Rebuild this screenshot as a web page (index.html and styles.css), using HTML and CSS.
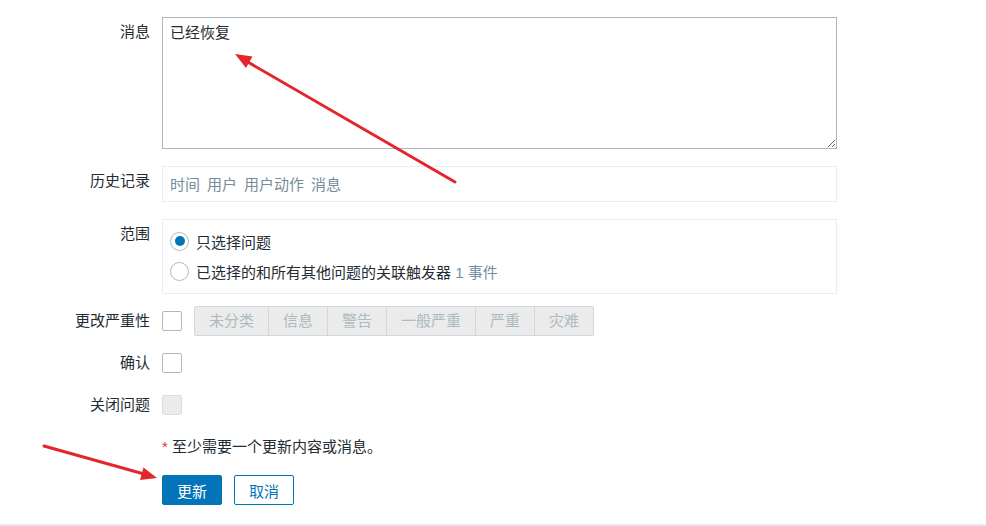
FILE: index.html
```html
<!DOCTYPE html>
<html lang="zh">
<head>
<meta charset="utf-8">
<link rel="stylesheet" href="styles.css">
</head>
<body>
<div class="page">
  <form class="form">
    <div class="row row-wide">
      <label class="label">消息</label>
      <textarea class="message">已经恢复</textarea>
    </div>
    <div class="row row-wide">
      <label class="label">历史记录</label>
      <div class="history">
        <span>时间</span><span>用户</span><span>用户动作</span><span>消息</span>
      </div>
    </div>
    <div class="row">
      <label class="label">范围</label>
      <div class="scope">
        <div class="radio-line"><span class="radio checked"></span><span>只选择问题</span></div>
        <div class="radio-line"><span class="radio"></span><span>已选择的和所有其他问题的关联触发器 <span class="muted">1 事件</span></span></div>
      </div>
    </div>
    <div class="row">
      <label class="label">更改严重性</label>
      <div class="field">
        <span class="checkbox"></span>
        <div class="severity">
          <span class="sev">未分类</span><span class="sev">信息</span><span class="sev">警告</span><span class="sev">一般严重</span><span class="sev">严重</span><span class="sev">灾难</span>
        </div>
      </div>
    </div>
    <div class="row">
      <label class="label">确认</label>
      <div class="field"><span class="checkbox"></span></div>
    </div>
    <div class="row">
      <label class="label">关闭问题</label>
      <div class="field"><span class="checkbox disabled"></span></div>
    </div>
    <div class="row">
      <span class="label"></span>
      <div class="note"><span class="star">*</span> 至少需要一个更新内容或消息。</div>
    </div>
    <div class="row">
      <span class="label"></span>
      <div class="buttons">
        <button type="button" class="btn primary">更新</button>
        <button type="button" class="btn secondary">取消</button>
      </div>
    </div>
  </form>
  <svg class="arrows" width="986" height="526" viewBox="0 0 986 526">
    <line x1="455" y1="182" x2="246" y2="61" stroke="#e5242b" stroke-width="3" stroke-linecap="round"/>
    <polygon points="235,54 252.5,56.5 246,68" fill="#e5242b"/>
    <line x1="44" y1="446" x2="144" y2="474" stroke="#e5242b" stroke-width="3" stroke-linecap="round"/>
    <polygon points="157,478 140,480 143.5,467.5" fill="#e5242b"/>
  </svg>
</div>
</body>
</html>
```

FILE: styles.css
```css
html, body {
  margin: 0;
  padding: 0;
  background: #ffffff;
}

body {
  font-family: "Liberation Sans", "Noto Sans CJK SC", Arial, sans-serif;
  font-size: 15px;
  color: #1f2c33;
}

.page {
  position: relative;
  height: 526px;
  box-sizing: border-box;
  padding-top: 17px;
  border-bottom: 2px solid #e6eaed;
  overflow: hidden;
}

.form {
  display: flex;
  flex-direction: column;
  gap: 12px;
}

.row {
  display: flex;
  align-items: flex-start;
  gap: 12px;
}

.row-wide {
  margin-bottom: 5px;
}

.label {
  width: 150px;
  flex: none;
  text-align: right;
  line-height: 30px;
  height: 30px;
}

.message {
  box-sizing: border-box;
  width: 675px;
  height: 132px;
  margin: 0;
  border: 1px solid #a9b9c2;
  border-radius: 0;
  padding: 6px 7px;
  font-family: inherit;
  font-size: 15px;
  line-height: 18px;
  color: #1f2c33;
  resize: both;
  outline: none;
}

.history {
  box-sizing: border-box;
  width: 675px;
  height: 36px;
  border: 1px solid #ebeef0;
  padding: 0 7px 1px;
  display: flex;
  align-items: center;
  gap: 7px;
  color: #768d99;
}

.scope {
  box-sizing: border-box;
  width: 675px;
  border: 1px solid #ebeef0;
  padding: 6px 7px 7px;
  display: flex;
  flex-direction: column;
}

.radio-line {
  display: flex;
  align-items: center;
  gap: 7px;
  height: 30px;
}

.radio {
  box-sizing: border-box;
  width: 19px;
  height: 19px;
  border: 1px solid #acbbc2;
  border-radius: 50%;
  background: #fff;
  display: flex;
  align-items: center;
  justify-content: center;
}

.radio.checked::after {
  content: "";
  width: 10px;
  height: 10px;
  border-radius: 50%;
  background: #0275b8;
}

.muted {
  color: #6f8ea3;
}

.field {
  display: flex;
  align-items: center;
  gap: 12px;
  height: 30px;
}

.checkbox {
  box-sizing: border-box;
  width: 20px;
  height: 20px;
  border: 1px solid #acbbc2;
  border-radius: 2px;
  background: #fff;
}

.checkbox.disabled {
  background: #ebebeb;
  border-color: #d8dee2;
}

.severity {
  display: flex;
  height: 30px;
  box-sizing: border-box;
  border: 1px solid #d0d8dc;
  border-radius: 2px;
  background: #ebebeb;
}

.sev {
  padding: 0 14px;
  line-height: 28px;
  color: #acbac1;
  border-left: 1px solid #d0d8dc;
}

.sev:first-child {
  border-left: none;
}

.note {
  line-height: 30px;
  height: 30px;
}

.star {
  color: #e33734;
}

.buttons {
  display: flex;
  gap: 12px;
  margin-top: 1px;
}

.btn {
  box-sizing: border-box;
  width: 60px;
  height: 30px;
  border-radius: 2px;
  font-family: inherit;
  font-size: 15px;
  padding: 0;
  cursor: pointer;
}

.btn.primary {
  background: #0275b8;
  border: 1px solid #0275b8;
  color: #ffffff;
}

.btn.secondary {
  background: #ffffff;
  border: 1px solid #0275b8;
  color: #0275b8;
}

.arrows {
  position: absolute;
  left: 0;
  top: 0;
  pointer-events: none;
}
```
